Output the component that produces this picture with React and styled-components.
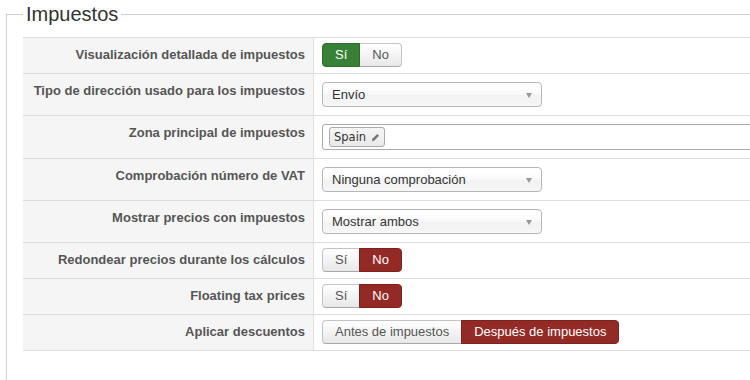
import React from "react";
import styled, { createGlobalStyle, css } from "styled-components";

const GlobalStyle = createGlobalStyle`
  html, body { margin: 0; padding: 0; background: #fff; overflow: hidden; }
  body { font-family: "Liberation Sans", Arial, sans-serif; font-size: 13px; color: #333; }
`;

const Page = styled.div`
  width: 750px;
  height: 380px;
  overflow: hidden;
  padding-left: 6px;
  box-sizing: border-box;
`;

const Fieldset = styled.fieldset`
  margin: 0;
  width: 840px;
  min-width: 0;
  border: 1px solid #cfcfcf;
  padding: 9px 0 40px 16px;
`;

const Legend = styled.legend`
  margin: 0;
  padding: 0 3px;
  font-size: 20px;
  line-height: 28px;
  color: #333;
  font-weight: normal;
`;

const Table = styled.div`
  display: flex;
  flex-direction: column;
  border-bottom: 1px solid #ddd;
`;

const Row = styled.div`
  display: grid;
  grid-template-columns: 291px 1fr;
  border-top: 1px solid #ddd;
`;

const Label = styled.div`
  background: #f5f5f5;
  border-right: 1px solid #e2e2e2;
  text-align: right;
  padding: 8px 8px 0 0;
  font-weight: bold;
  color: #555;
  line-height: 18px;
  white-space: nowrap;
`;

const Value = styled.div`
  padding: 5px 8px 6px;
  display: flex;
  align-items: flex-start;
`;

const Group = styled.div`
  display: inline-flex;
`;

const Btn = styled.span`
  display: inline-block;
  box-sizing: border-box;
  height: 24px;
  line-height: 22px;
  padding: 0 12px;
  font-size: 13px;
  color: #555;
  border: 1px solid #c4c4c4;
  border-bottom-color: #a8a8a8;
  background: linear-gradient(#ffffff, #e8e8e8);
  white-space: nowrap;
  & + & { margin-left: -1px; }
  &:first-child { border-radius: 4px 0 0 4px; }
  &:last-child { border-radius: 0 4px 4px 0; }
  ${(p) =>
    p.$active === "yes" &&
    css`
      background: #378137;
      border-color: #2c6b2c;
      color: #fff;
      position: relative;
    `}
  ${(p) =>
    p.$active === "no" &&
    css`
      background: #942a25;
      border-color: #7d211d;
      color: #fff;
      position: relative;
    `}
`;

const SelectBox = styled.div`
  box-sizing: border-box;
  width: 220px;
  height: 25px;
  margin: 3px 0 2px;
  padding: 0 9px 0 9px;
  border: 1px solid #b5b5b5;
  border-radius: 4px;
  background: linear-gradient(#ffffff 20%, #f8f8f8 50%, #f2f2f2 52%, #f6f6f6 100%);
  display: flex;
  align-items: center;
  justify-content: space-between;
  color: #333;
  font-size: 13px;
  box-shadow: 0 0 2px #fff inset;
`;

const Arrow = styled.span`
  width: 0;
  height: 0;
  border-left: 3.5px solid transparent;
  border-right: 3.5px solid transparent;
  border-top: 5px solid #999;
  margin-top: 1px;
`;

const TagInput = styled.div`
  box-sizing: border-box;
  width: 460px;
  height: 26px;
  margin: 3px 0 2px;
  padding: 0 6px;
  border: 1px solid #aaa;
  border-radius: 3px;
  background: #fff;
  display: flex;
  align-items: center;
`;

const Chip = styled.span`
  box-sizing: border-box;
  height: 20px;
  display: inline-flex;
  align-items: center;
  gap: 5px;
  padding: 0 4px 0 4px;
  border: 1px solid #aaa;
  border-radius: 3px;
  background: linear-gradient(#f6f6f6, #e9e9e9);
  font-family: "DejaVu Sans", Verdana, sans-serif;
  font-size: 11.5px;
  color: #333;
`;

const Pencil = () => (
  <svg width="9" height="9" viewBox="0 0 9 9">
    <path d="M0.8 8.2 L1.6 5.6 L6.2 1 L8 2.8 L3.4 7.4 Z" fill="#777" />
  </svg>
);

const Select = ({ children }) => (
  <SelectBox>
    <span>{children}</span>
    <Arrow />
  </SelectBox>
);

export default function App() {
  return (
    <Page>
      <GlobalStyle />
      <Fieldset>
        <Legend>Impuestos</Legend>
        <Table>
          <Row>
            <Label>Visualización detallada de impuestos</Label>
            <Value>
              <Group>
                <Btn $active="yes">Sí</Btn>
                <Btn>No</Btn>
              </Group>
            </Value>
          </Row>
          <Row>
            <Label>Tipo de dirección usado para los impuestos</Label>
            <Value>
              <Select>Envío</Select>
            </Value>
          </Row>
          <Row>
            <Label>Zona principal de impuestos</Label>
            <Value>
              <TagInput>
                <Chip>
                  Spain <Pencil />
                </Chip>
              </TagInput>
            </Value>
          </Row>
          <Row>
            <Label>Comprobación número de VAT</Label>
            <Value>
              <Select>Ninguna comprobación</Select>
            </Value>
          </Row>
          <Row>
            <Label>Mostrar precios con impuestos</Label>
            <Value>
              <Select>Mostrar ambos</Select>
            </Value>
          </Row>
          <Row>
            <Label>Redondear precios durante los cálculos</Label>
            <Value>
              <Group>
                <Btn>Sí</Btn>
                <Btn $active="no">No</Btn>
              </Group>
            </Value>
          </Row>
          <Row>
            <Label>Floating tax prices</Label>
            <Value>
              <Group>
                <Btn>Sí</Btn>
                <Btn $active="no">No</Btn>
              </Group>
            </Value>
          </Row>
          <Row>
            <Label>Aplicar descuentos</Label>
            <Value>
              <Group>
                <Btn>Antes de impuestos</Btn>
                <Btn $active="no">Después de impuestos</Btn>
              </Group>
            </Value>
          </Row>
        </Table>
      </Fieldset>
    </Page>
  );
}
